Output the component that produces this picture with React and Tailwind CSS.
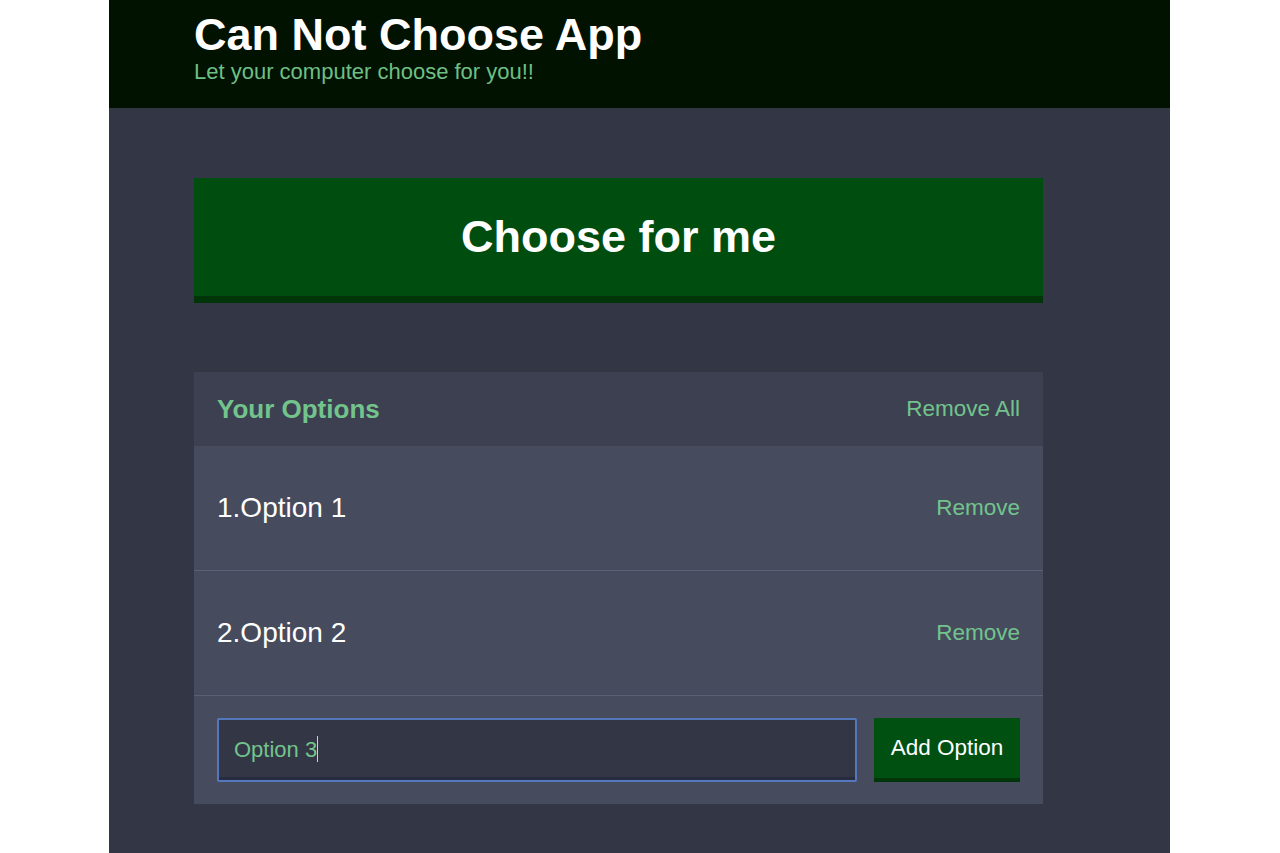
import React from "react";

const options = ["Option 1", "Option 2"];

export default function App() {
  return (
    <div
      className="min-h-[853px] bg-white"
      style={{ fontFamily: '"Liberation Sans", Arial, sans-serif' }}
    >
      <div className="ml-[109px] w-[1061px] min-h-[853px] bg-[#333645]">
        <header className="h-[108px] bg-[#011201] pl-[85px] pt-[9px]">
          <h1 className="text-[45px] leading-[52px] font-bold text-white">
            Can Not Choose App
          </h1>
          <h2 className="-mt-[2px] text-[22px] leading-[25px] text-[#6fbf84]">
            Let your computer choose for you!!
          </h2>
        </header>

        <main className="pl-[85px] pt-[70px] w-[934px]">
          <button className="w-[849px] h-[125px] bg-[#004d10] border-b-[7px] border-[#003409] text-white text-[45px] font-bold">
            Choose for me
          </button>

          <div className="mt-[69px] w-[849px] bg-[#464b5e]">
            <div className="h-[74px] bg-[#3c4051] px-[23px] flex items-center justify-between">
              <h3 className="text-[26px] font-bold text-[#72c48c]">
                Your Options
              </h3>
              <button className="text-[22.5px] text-[#72c48c]">
                Remove All
              </button>
            </div>

            {options.map((opt, i) => (
              <div
                key={opt}
                className="h-[125px] px-[23px] flex items-center justify-between border-b border-[#5b6074]"
              >
                <p className="text-[28px] text-white">
                  {i + 1}.{opt}
                </p>
                <button className="text-[22.5px] text-[#72c48c]">Remove</button>
              </div>
            ))}

            <form className="px-[23px] py-[22px] flex gap-[17px]">
              <div className="flex-1 h-[64px] bg-[#333645] border-2 border-[#5577bb] shadow-[inset_0_-3px_0_#272c40] rounded-[2px] flex items-center pl-[15px] pb-[2px]">
                <span className="text-[22px] text-[#72c48c]">Option 3</span>
                <span className="w-[1px] h-[26px] bg-[#d0d0d0]" />
              </div>
              <button
                type="button"
                className="w-[146px] h-[64px] bg-[#005012] border-b-[4px] border-[#00360a] text-[22.5px] text-white"
              >
                Add Option
              </button>
            </form>
          </div>
        </main>
      </div>
    </div>
  );
}
